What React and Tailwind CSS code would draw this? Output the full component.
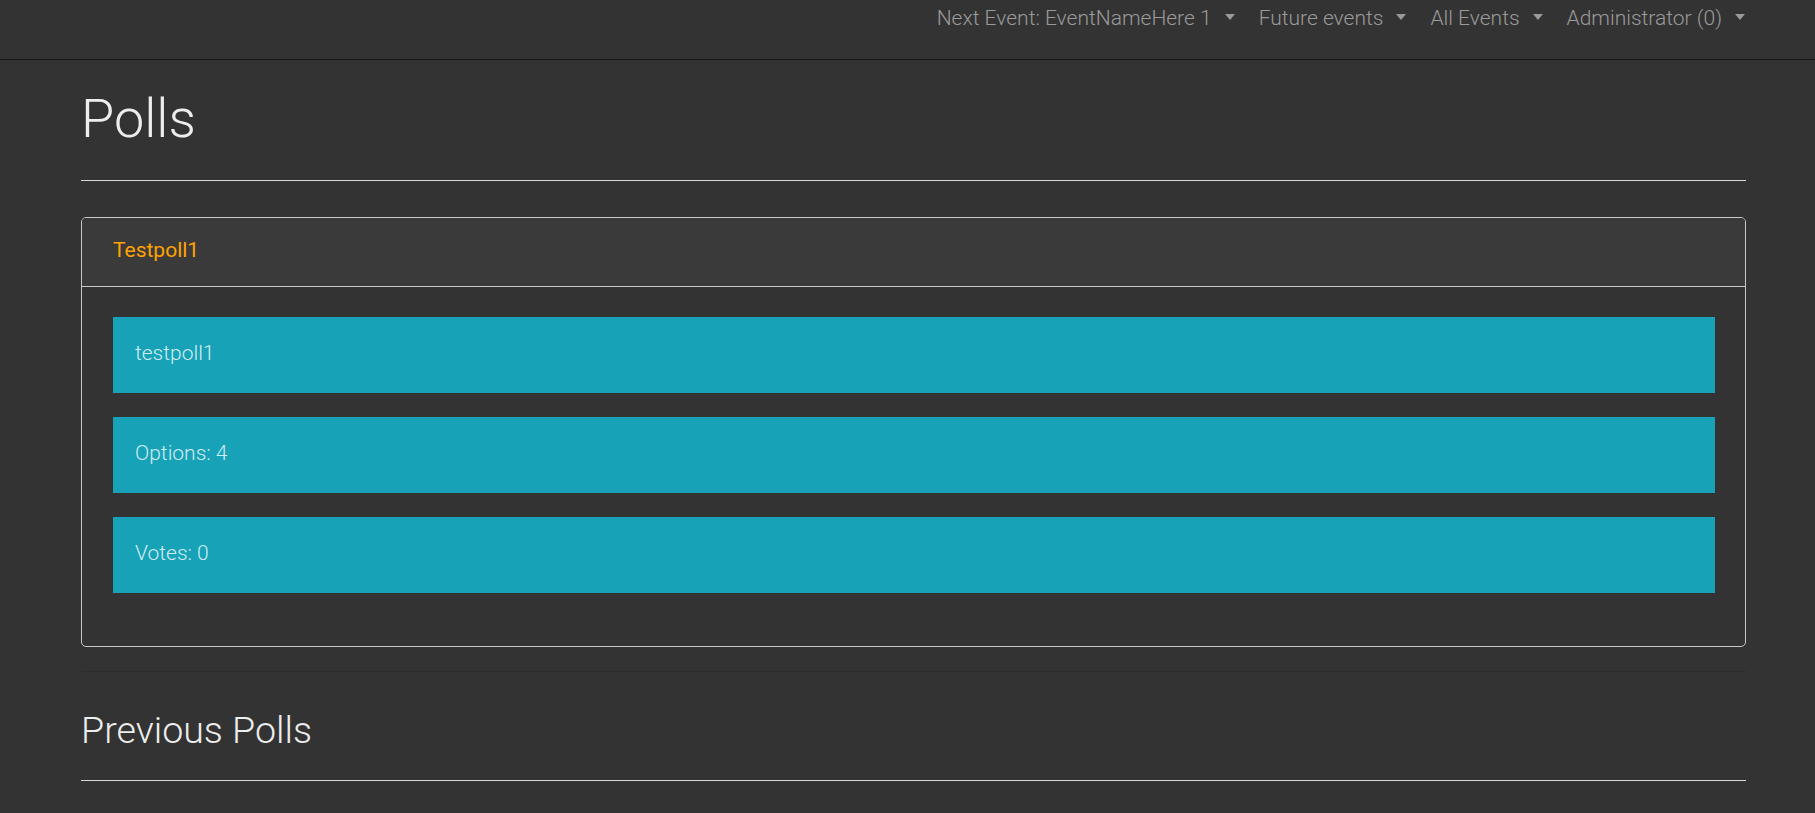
import React from "react";

const navItems = [
  "Next Event: EventNameHere 1",
  "Future events",
  "All Events",
  "Administrator (0)",
];

const pollRows = ["testpoll1", "Options: 4", "Votes: 0"];

export default function App() {
  return (
    <div className="min-h-screen bg-[#333333] font-['Roboto',sans-serif] text-[#eeeeee]">
      {/* ======================
          NAVBAR
      ====================== */}
      <nav className="h-[60px] border-b border-[#161616] flex justify-end pr-[70px]">
        <ul className="flex items-start gap-[24px] pt-[3px]">
          {navItems.map((item) => (
            <NavDropdown key={item} label={item} />
          ))}
        </ul>
      </nav>

      {/* ======================
          CURRENT POLLS
      ====================== */}
      <main className="ml-[81px] w-[1665px]">
        <h1 className="mt-[26px] text-[54px] leading-[65px] font-light text-[#ededed]">
          Polls
        </h1>
        <hr className="mt-[29px] border-0 border-t border-[#d9d9d9]" />

        <div className="mt-[36px] border border-[#c9c9c9] rounded-[5px] overflow-hidden">
          <div className="h-[69px] bg-[#3a3a3a] border-b border-[#c9c9c9] pl-[31px] pt-[17px]">
            <h5 className="text-[21px] leading-[31.5px] text-[#ffa200]">
              Testpoll1
            </h5>
          </div>
          <div className="pt-[30px] pb-[53px] pl-[31px] pr-[30px] flex flex-col gap-[24px]">
            {pollRows.map((row) => (
              <div
                key={row}
                className="h-[76px] bg-[#17a2b8] pl-[22px] pt-[21px] text-[21px] leading-[31.5px] font-light text-[#d1ecf1]"
              >
                {row}
              </div>
            ))}
          </div>
        </div>

        <hr className="mt-[24px] border-0 border-t border-[#2c2c2c]" />

        {/* ======================
            PREVIOUS POLLS
        ====================== */}
        <h3 className="mt-[36px] text-[37.6px] leading-[45px] font-light text-[#ededed]">
          Previous Polls
        </h3>
        <hr className="mt-[27px] border-0 border-t border-[#d9d9d9]" />
      </main>
    </div>
  );
}

/* ======================
   NAV DROPDOWN
====================== */
function NavDropdown({ label }) {
  return (
    <li className="flex items-start gap-[13px] text-[21px] leading-[31px] font-light text-[#9a9a9a] cursor-pointer">
      <span>{label}</span>
      <span className="mt-[11px] w-0 h-0 border-t-[6px] border-t-[#9a9a9a] border-x-[5.5px] border-x-transparent" />
    </li>
  );
}
